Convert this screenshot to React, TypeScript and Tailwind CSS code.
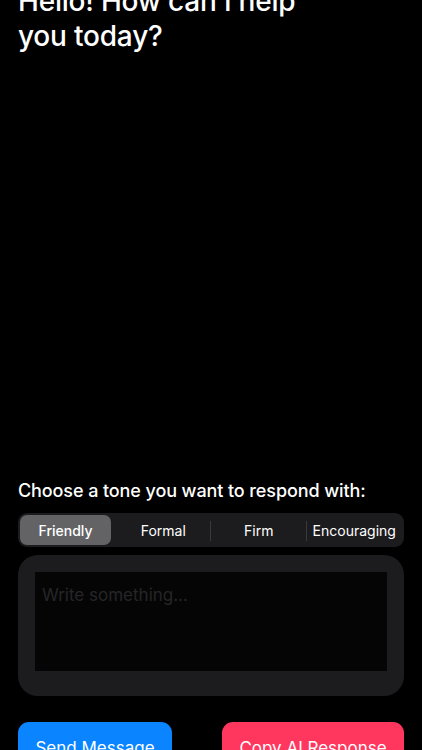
const tones = ["Friendly", "Formal", "Firm", "Encouraging"];

export default function App() {
  const selected = 0;
  return (
    <div
      className="h-[750px] w-full overflow-hidden bg-black px-[18px] text-white"
      style={{ fontFamily: "Inter, 'Noto Sans', sans-serif" }}
    >
      <h1 className="-mt-[16px] w-[300px] text-[28px] font-medium leading-[35px] tracking-[-0.2px]">
        Hello! How can I help you today?
      </h1>

      <p className="mt-[426px] text-[18px] font-medium leading-[22px] tracking-[-0.1px]">
        Choose a tone you want to respond with:
      </p>

      <div className="mt-[11px] grid h-[34px] grid-cols-4 rounded-[9px] bg-[#1c1c1e] p-[2px]">
        {tones.map((t, i) => {
          const showSep = i > 0 && i !== selected && i - 1 !== selected;
          return (
            <div key={t} className="relative flex items-center">
              {showSep && (
                <span className="absolute -left-px top-[6px] h-[20px] w-px bg-[#3a3a3c]" />
              )}
              {i === selected ? (
                <div className="flex h-full w-[91px] items-center justify-center rounded-[7px] bg-[#636366] text-[14px] font-medium">
                  {t}
                </div>
              ) : (
                <div className="flex h-full w-full items-center justify-center text-[14px]">
                  {t}
                </div>
              )}
            </div>
          );
        })}
      </div>

      <div className="mt-2 h-[141px] rounded-[20px] bg-[#1c1c1e] px-[17px] pb-[25px] pt-[17px]">
        <div className="h-full bg-[#050505] px-[7px] pt-[12px] text-[17px] leading-[22px] text-[#262628]">
          Write something...
        </div>
      </div>

      <div className="mt-[26px] flex justify-between">
        <button className="h-[56px] w-[154px] rounded-[11px] bg-[#0a84ff] pb-[3px] text-[17px] text-white">
          Send Message
        </button>
        <button className="h-[56px] w-[182px] rounded-[11px] bg-[#ff375f] pb-[3px] text-[17px] text-white">
          Copy AI Response
        </button>
      </div>
    </div>
  );
}
